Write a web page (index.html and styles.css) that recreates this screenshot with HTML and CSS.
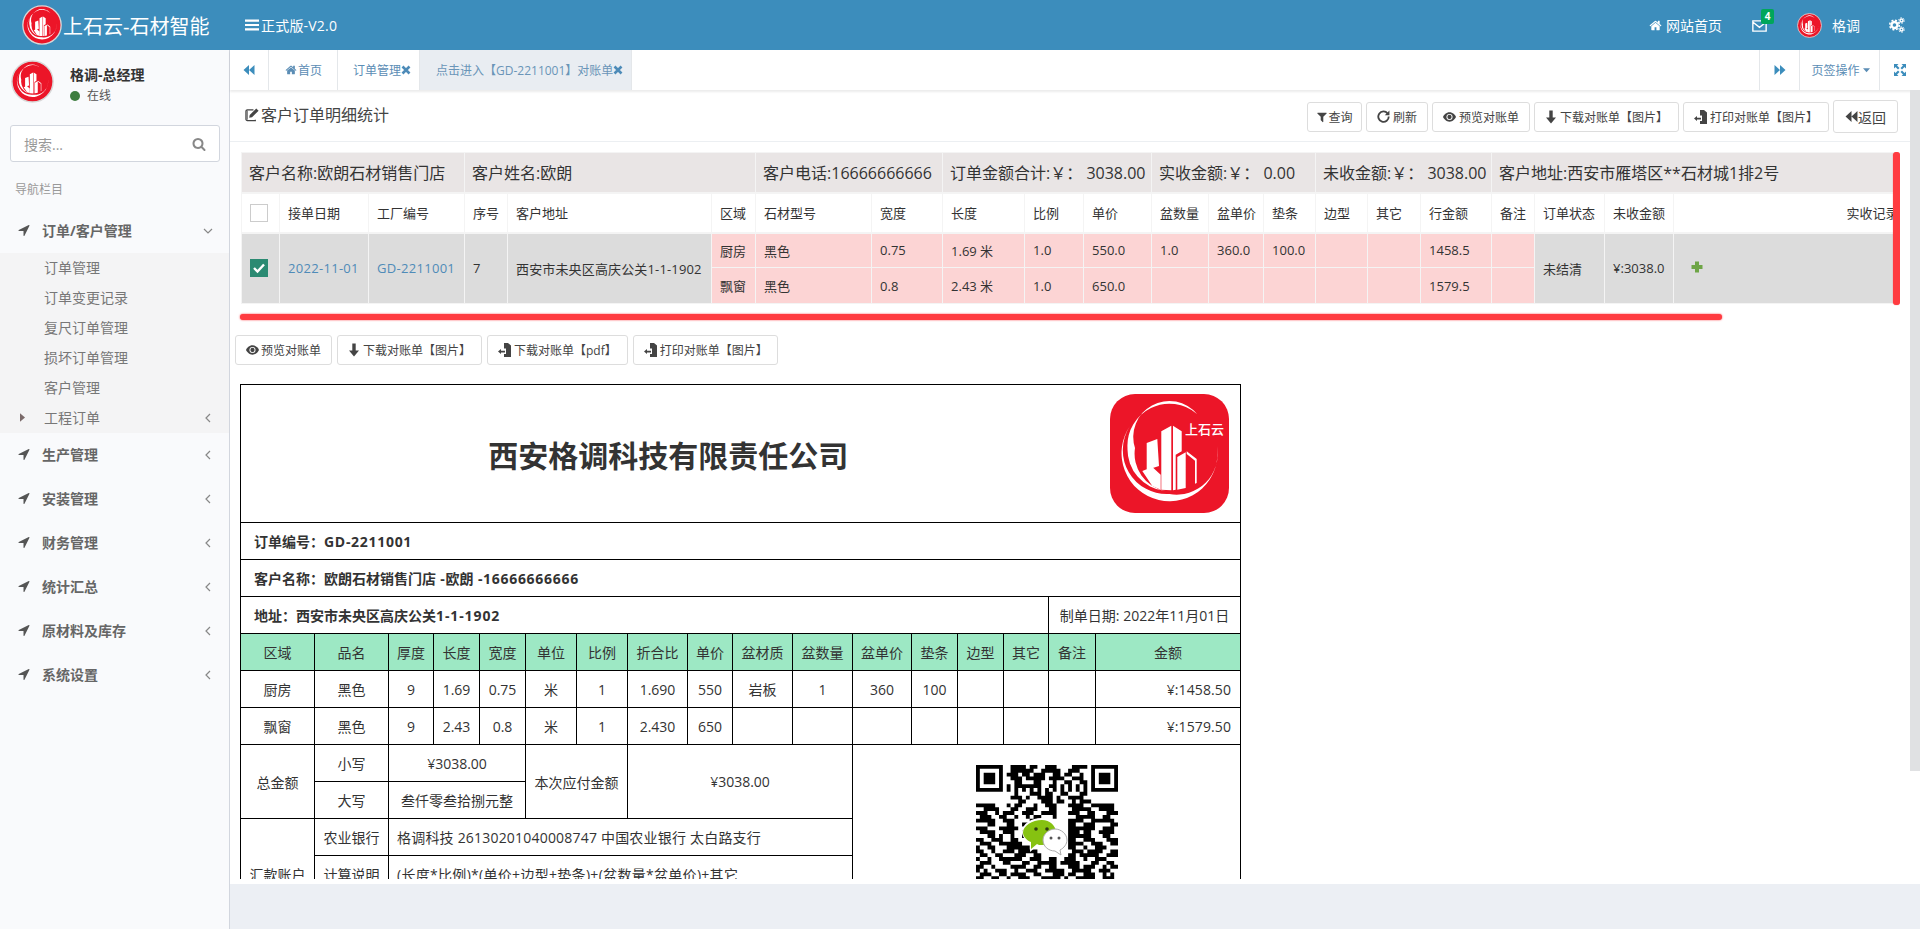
FILE: index.html
```html
<!DOCTYPE html>
<html lang="zh-CN">
<head>
<meta charset="utf-8">
<title>上石云-石材智能</title>
<link rel="stylesheet" href="styles.css">
</head>
<body>
<svg class="sprite" xmlns="http://www.w3.org/2000/svg">
  <symbol id="art" viewBox="0 0 119 119">
    <path fill="#fff" d="M107 52A48 48 0 1 1 20 32 44 44 0 0 0 59.500 100 41 41 0 0 0 107 52Z"/>
    <path fill="#fff" d="M87 20A42 42 0 0 0 17.500 54 42 42 0 0 0 55 97 38 38 0 0 1 25 54 36 36 0 0 1 87 20Z"/>
    <path fill="#fff" d="M36.700 49 47.300 45 49 72 36.700 76ZM32.300 77 42.300 73 50.700 80.700V95.700L42.300 92ZM51.300 37.300 61.300 31.700V96.300L51.300 95.700ZM63 31.700 71.700 37.300V57.300L65.700 60.700V95.700L63 96.300ZM67.300 63 75.700 58.300V94L67.300 95.700ZM76.700 57.300 86.700 65V89L85 89.700V66.700L76.700 60Z"/>
  </symbol>
  <symbol id="disc" viewBox="0 0 119 119">
    <circle cx="59.500" cy="59.500" r="57" fill="#ec1528" stroke="#d8d8d8" stroke-width="4"/>
    <use href="#art" x="6" y="6" width="107" height="107"/>
  </symbol>
  <symbol id="i-home" viewBox="0 0 1792 1792"><path d="M1472 992v480q0 26-19 45t-45 19h-384v-384h-256v384h-384q-26 0-45-19t-19-45v-480q0-1 .5-3t.5-3l575-474 575 474q1 2 1 6zm223-69l-62 74q-8 9-21 11h-3q-13 0-21-7l-692-577-692 577q-12 8-24 7-13-2-21-11l-62-74q-8-10-7-23.500t11-21.500l719-599q32-26 76-26t76 26l244 204v-195q0-14 9-23t23-9h192q14 0 23 9t9 23v408l219 182q10 8 11 21.500t-7 23.500z"/></symbol>
  <symbol id="i-nav" viewBox="0 0 1792 1792"><path d="M1593 349l-640 1280q-17 35-57 35-5 0-15-2-22-5-35.500-22.500t-13.500-39.500v-576h-576q-22 0-39.500-13.500t-22.500-35.500 4-42 29-30l1280-640q13-7 29-7 27 0 45 19 15 14 18.500 34.500t-6.500 39.500z"/></symbol>
  <symbol id="i-search" viewBox="0 0 1792 1792"><path d="M1216 832q0-185-131.500-316.500t-316.500-131.500-316.500 131.500-131.500 316.500 131.500 316.500 316.500 131.500 316.500-131.500 131.500-316.500zm512 832q0 52-38 90t-90 38q-54 0-90-38l-343-342q-179 124-399 124-143 0-273.500-55.500t-225-150-150-225-55.500-273.500 55.500-273.500 150-225 225-150 273.500-55.500 273.500 55.500 225 150 150 225 55.500 273.500q0 220-124 399l343 343q37 37 37 90z"/></symbol>
  <symbol id="i-filter" viewBox="0 0 1792 1792"><path d="M1595 295q17 41-14 70l-493 493v742q0 42-39 59-13 5-25 5-27 0-45-19l-256-256q-19-19-19-45v-486l-493-493q-31-29-14-70 17-39 59-39h1280q42 0 59 39z"/></symbol>
  <symbol id="i-bars" viewBox="0 0 14 14"><path d="M0 1.500h14v2.200H0zM0 5.900h14v2.200H0zM0 10.300h14v2.200H0z"/></symbol>
  <symbol id="i-back" viewBox="0 0 12 12"><path d="M6 1v10L0.500 6zM11.500 1v10L6 6z"/></symbol>
  <symbol id="i-fwd" viewBox="0 0 12 12"><path d="M0.500 1v10L6 6zM6 1v10l5.500-5z"/></symbol>
  <symbol id="i-expand" viewBox="0 0 12 12"><path d="M0 0h4.500L3 1.500 5.500 4 4 5.500 1.500 3 0 4.500zM12 0v4.500L10.500 3 8 5.500 6.500 4 9 1.500 7.500 0zM0 12V7.500L1.500 9 4 6.500 5.500 8 3 10.500 4.500 12zM12 12H7.500L9 10.500 6.500 8 8 6.500 10.500 9 12 7.500z"/></symbol>
  <symbol id="i-times" viewBox="0 0 10 10"><path d="M1.500 1.500l7 7M8.500 1.500l-7 7" fill="none" stroke="currentColor" stroke-width="2.600"/></symbol>
  <symbol id="i-edit" viewBox="0 0 16 16"><path d="M11 13.500v1H2.500a1.500 1.500 0 0 1-1.500-1.500V4.500A1.500 1.500 0 0 1 2.500 3H9" fill="none" stroke="currentColor" stroke-width="1.300"/><path d="M1.800 3.600h1v10h-1zM12 1.500l2.500 2.500-7 7-3 .5.500-3z"/></symbol>
  <symbol id="i-refresh" viewBox="0 0 12 12"><path d="M9.800 3.200A4.800 4.800 0 1 0 10.800 6" fill="none" stroke="currentColor" stroke-width="1.700"/><path d="M11.500 .5v4.300H7.200z"/></symbol>
  <symbol id="i-eye" viewBox="0 0 14 12"><path d="M7 1c3.500 0 6 2.800 7 5-1 2.200-3.500 5-7 5S1 8.200 0 6c1-2.200 3.500-5 7-5z"/><circle cx="7" cy="6" r="3.300" fill="#fff"/><circle cx="7" cy="6" r="2.300"/></symbol>
  <symbol id="i-down" viewBox="0 0 12 14"><path d="M4.300 .5h3.400v7H11L6 13.500 1 7.500h3.300z"/></symbol>
  <symbol id="i-print" viewBox="0 0 14 14"><path d="M6 0h4l3 2.500V14H6v-3h2V5.500H6zM0 8.500 3 6v1.800h4v1.600H3v1.600z"/></symbol>
  <symbol id="i-mail" viewBox="0 0 16 13"><path d="M.8 1h14.400v11H.8zM1 2.500l7 5.500 7-5.500" fill="none" stroke="currentColor" stroke-width="1.500"/></symbol>
  <symbol id="i-cogs" viewBox="0 0 16 16"><g fill="none" stroke="currentColor"><circle cx="5.500" cy="8" r="3" stroke-width="2.400"/><circle cx="5.500" cy="8" r="4.800" stroke-width="1.500" stroke-dasharray="2 1.770"/><circle cx="12.500" cy="3.500" r="1.500" stroke-width="1.500"/><circle cx="12.500" cy="12.500" r="1.500" stroke-width="1.500"/><circle cx="12.500" cy="3.500" r="2.800" stroke-width="1" stroke-dasharray="1.400 1.530"/><circle cx="12.500" cy="12.500" r="2.800" stroke-width="1" stroke-dasharray="1.400 1.530"/></g></symbol>
  <symbol id="i-left" viewBox="0 0 6 10"><path d="M5 1 1 5l4 4" fill="none" stroke="currentColor" stroke-width="1.200"/></symbol>
  <symbol id="i-chev" viewBox="0 0 10 6"><path d="M1 1l4 4 4-4" fill="none" stroke="currentColor" stroke-width="1.200"/></symbol>
  <symbol id="i-caret" viewBox="0 0 6 10"><path d="M0 0l6 5-6 5z"/></symbol>
  <symbol id="i-caretd" viewBox="0 0 8 5"><path d="M0 0h8L4 4.500z"/></symbol>
  <symbol id="i-plus" viewBox="0 0 12 12"><path d="M4 .5h4V4h3.500v4H8v3.500H4V8H.5V4H4z"/></symbol>
  <symbol id="i-check" viewBox="0 0 18 18"><path d="M4 9l3.500 3.500L14 5.500" fill="none" stroke="#fff" stroke-width="2.400"/></symbol>
</svg>

<header class="topbar">
  <div class="brand">
    <svg class="brand-disc"><use href="#disc"/></svg>
    <span class="brand-name">上石云-石材智能</span>
  </div>
  <div class="version"><svg class="ico ico-bars"><use href="#i-bars"/></svg>正式版-V2.0</div>
  <nav class="top-actions">
    <a class="top-link"><svg class="ico ico-13"><use href="#i-home"/></svg>网站首页</a>
    <a class="top-mail"><svg class="ico ico-mail"><use href="#i-mail"/></svg><b class="badge">4</b></a>
    <a class="top-user"><svg class="user-disc"><use href="#disc"/></svg>格调</a>
    <a class="top-cogs"><svg class="ico ico-cogs"><use href="#i-cogs"/></svg></a>
  </nav>
</header>

<div class="shell">
  <aside class="sidebar">
    <div class="user-panel">
      <svg class="panel-disc"><use href="#disc"/></svg>
      <div class="panel-info">
        <p class="panel-name">格调-总经理</p>
        <p class="panel-status"><i class="dot"></i>在线</p>
      </div>
    </div>
    <div class="search"><span>搜索...</span><svg class="ico ico-search"><use href="#i-search"/></svg></div>
    <div class="nav-title">导航栏目</div>
    <ul class="menu">
      <li class="menu-item"><svg class="ico ico-nav"><use href="#i-nav"/></svg><span>订单/客户管理</span><svg class="ico ico-chev"><use href="#i-chev"/></svg></li>
      <li class="submenu">
        <a>订单管理</a><a>订单变更记录</a><a>复尺订单管理</a><a>损坏订单管理</a><a>客户管理</a>
        <a class="sub-more"><svg class="ico ico-caret"><use href="#i-caret"/></svg>工程订单<svg class="ico ico-left"><use href="#i-left"/></svg></a>
      </li>
      <li class="menu-item"><svg class="ico ico-nav"><use href="#i-nav"/></svg><span>生产管理</span><svg class="ico ico-left"><use href="#i-left"/></svg></li>
      <li class="menu-item"><svg class="ico ico-nav"><use href="#i-nav"/></svg><span>安装管理</span><svg class="ico ico-left"><use href="#i-left"/></svg></li>
      <li class="menu-item"><svg class="ico ico-nav"><use href="#i-nav"/></svg><span>财务管理</span><svg class="ico ico-left"><use href="#i-left"/></svg></li>
      <li class="menu-item"><svg class="ico ico-nav"><use href="#i-nav"/></svg><span>统计汇总</span><svg class="ico ico-left"><use href="#i-left"/></svg></li>
      <li class="menu-item"><svg class="ico ico-nav"><use href="#i-nav"/></svg><span>原材料及库存</span><svg class="ico ico-left"><use href="#i-left"/></svg></li>
      <li class="menu-item"><svg class="ico ico-nav"><use href="#i-nav"/></svg><span>系统设置</span><svg class="ico ico-left"><use href="#i-left"/></svg></li>
    </ul>
  </aside>

  <main class="main">
    <div class="tabs">
      <a class="tab tab-arrow"><svg class="ico ico-arrow"><use href="#i-back"/></svg></a>
      <a class="tab tab-home"><svg class="ico ico-12"><use href="#i-home"/></svg>首页</a>
      <a class="tab tab-orders">订单管理<svg class="ico ico-x"><use href="#i-times"/></svg></a>
      <a class="tab tab-active">点击进入【GD-2211001】对账单<svg class="ico ico-x"><use href="#i-times"/></svg></a>
      <div class="tabs-fill"></div>
      <a class="tab tab-arrow tab-end"><svg class="ico ico-arrow"><use href="#i-fwd"/></svg></a>
      <a class="tab tab-ops">页签操作<svg class="ico ico-caretd"><use href="#i-caretd"/></svg></a>
      <a class="tab tab-full"><svg class="ico ico-arrow"><use href="#i-expand"/></svg></a>
    </div>

    <section class="content">
      <div class="box-head">
        <h3 class="box-title"><svg class="ico ico-edit"><use href="#i-edit"/></svg>客户订单明细统计</h3>
        <div class="toolbar">
          <button class="btn btn-tight"><svg class="ico ico-12"><use href="#i-filter"/></svg>查询</button>
          <button class="btn btn-mid"><svg class="ico ico-refresh"><use href="#i-refresh"/></svg>刷新</button>
          <button class="btn"><svg class="ico ico-eye"><use href="#i-eye"/></svg>预览对账单</button>
          <button class="btn"><svg class="ico ico-down"><use href="#i-down"/></svg>下载对账单【图片】</button>
          <button class="btn btn-print"><svg class="ico ico-print"><use href="#i-print"/></svg>打印对账单【图片】</button>
          <button class="btn btn-back"><svg class="ico ico-13"><use href="#i-back"/></svg>返回</button>
        </div>
      </div>

      <div class="orders-wrap">
        <table class="orders">
          <colgroup><col><col><col><col><col><col><col><col><col><col><col><col><col><col><col><col><col><col><col><col><col></colgroup>
          <tr class="sum-row">
            <td colspan="3">客户名称:欧朗石材销售门店</td>
            <td colspan="3">客户姓名:欧朗</td>
            <td colspan="2">客户电话:16666666666</td>
            <td colspan="3">订单金额合计:￥： 3038.00</td>
            <td colspan="3">实收金额:￥： 0.00</td>
            <td colspan="3">未收金额:￥： 3038.00</td>
            <td colspan="4">客户地址:西安市雁塔区**石材城1排2号</td>
          </tr>
          <tr class="head-row">
            <td><i class="check"></i></td>
            <td>接单日期</td><td>工厂编号</td><td>序号</td><td>客户地址</td><td>区域</td><td>石材型号</td><td>宽度</td><td>长度</td><td>比例</td><td>单价</td><td>盆数量</td><td>盆单价</td><td>垫条</td><td>边型</td><td>其它</td><td>行金额</td><td>备注</td><td>订单状态</td><td>未收金额</td><td class="center">实收记录</td>
          </tr>
          <tr class="data-row">
            <td class="grey" rowspan="2"><svg class="check-on"><use href="#i-check"/></svg></td>
            <td class="grey link" rowspan="2">2022-11-01</td>
            <td class="grey link" rowspan="2">GD-2211001</td>
            <td class="grey" rowspan="2">7</td>
            <td class="grey addr" rowspan="2">西安市未央区高庆公关1-1-1902</td>
            <td class="pink">厨房</td><td class="pink">黑色</td><td class="pink">0.75</td><td class="pink">1.69 米</td><td class="pink">1.0</td><td class="pink">550.0</td><td class="pink">1.0</td><td class="pink">360.0</td><td class="pink">100.0</td><td class="pink"></td><td class="pink"></td><td class="pink">1458.5</td><td class="pink"></td>
            <td class="grey" rowspan="2">未结清</td>
            <td class="grey" rowspan="2">¥:3038.0</td>
            <td class="grey plus-cell" rowspan="2"><svg class="ico ico-plus"><use href="#i-plus"/></svg></td>
          </tr>
          <tr class="data-row data-row-last">
            <td class="pink">飘窗</td><td class="pink">黑色</td><td class="pink">0.8</td><td class="pink">2.43 米</td><td class="pink">1.0</td><td class="pink">650.0</td><td class="pink"></td><td class="pink"></td><td class="pink"></td><td class="pink"></td><td class="pink"></td><td class="pink">1579.5</td><td class="pink"></td>
          </tr>
        </table>
        <i class="red-v"></i>
      </div>
      <i class="red-h"></i>

      <div class="toolbar toolbar-low">
        <button class="btn"><svg class="ico ico-eye"><use href="#i-eye"/></svg>预览对账单</button>
        <button class="btn"><svg class="ico ico-down"><use href="#i-down"/></svg>下载对账单【图片】</button>
        <button class="btn btn-print"><svg class="ico ico-print"><use href="#i-print"/></svg>下载对账单【pdf】</button>
        <button class="btn btn-print"><svg class="ico ico-print"><use href="#i-print"/></svg>打印对账单【图片】</button>
      </div>

      <div class="invoice-wrap">
        <table class="invoice">
          <colgroup><col><col><col><col><col><col><col><col><col><col><col><col><col><col><col><col><col></colgroup>
          <tr class="title-row">
            <td colspan="16" class="inv-title">西安格调科技有限责任公司</td>
            <td class="inv-logo"><svg class="logo-big" viewBox="0 0 119 119"><rect width="119" height="119" rx="25" fill="#ec1528"/><use href="#art" width="119" height="119"/><text x="75" y="40" class="mark-text">上石云</text></svg></td>
          </tr>
          <tr><td colspan="17" class="meta">订单编号：<span class="num">GD-2211001</span></td></tr>
          <tr><td colspan="17" class="meta">客户名称：欧朗石材销售门店<span class="num"> -</span>欧朗<span class="num"> -16666666666</span></td></tr>
          <tr><td colspan="15" class="meta">地址：西安市未央区高庆公关<span class="num num-wide">1-1-1902</span></td><td colspan="2" class="inv-date">制单日期: 2022年11月01日</td></tr>
          <tr class="inv-head"><td>区域</td><td>品名</td><td>厚度</td><td>长度</td><td>宽度</td><td>单位</td><td>比例</td><td>折合比</td><td>单价</td><td>盆材质</td><td>盆数量</td><td>盆单价</td><td>垫条</td><td>边型</td><td>其它</td><td>备注</td><td>金额</td></tr>
          <tr><td>厨房</td><td>黑色</td><td>9</td><td>1.69</td><td>0.75</td><td>米</td><td>1</td><td>1.690</td><td>550</td><td>岩板</td><td>1</td><td>360</td><td>100</td><td></td><td></td><td></td><td class="money">¥:1458.50</td></tr>
          <tr><td>飘窗</td><td>黑色</td><td>9</td><td>2.43</td><td>0.8</td><td>米</td><td>1</td><td>2.430</td><td>650</td><td></td><td></td><td></td><td></td><td></td><td></td><td></td><td class="money">¥:1579.50</td></tr>
          <tr>
            <td rowspan="2">总金额</td><td>小写</td><td colspan="3">¥3038.00</td>
            <td colspan="2" rowspan="2">本次应付金额</td><td colspan="4" rowspan="2">¥3038.00</td>
            <td colspan="6" rowspan="5" class="qr-cell">
              <svg class="qr" viewBox="0 0 142 142">
                <g transform="scale(3.838)">
                  <path fill-rule="evenodd" d="M0 0h7v7H0zM1 1v5h5V1zM2 2h3v3H2zM30 0h7v7h-7zM31 1v5h5V1zM32 2h3v3h-3z"/>
                  <path fill="none" stroke="#000" d="M9 .5h4M14 .5h2M18 .5h3M25 .5h4M9 1.500h6M17 1.500h5M24 1.500h3M8 2.500h3M12 2.500h2M15 2.500h3M20 2.500h2M23 2.500h2M27 2.500h1M9 3.500h3M13 3.500h5M19 3.500h4M25 3.500h3M10 4.500h2M15 4.500h2M20 4.500h1M23 4.500h2M27 4.500h2M8 5.500h1M10 5.500h7M19 5.500h2M22 5.500h1M24 5.500h1M26 5.500h1M28 5.500h1M8 6.500h1M10 6.500h1M12 6.500h1M14 6.500h1M16 6.500h1M18 6.500h1M20 6.500h1M22 6.500h1M24 6.500h1M26 6.500h1M28 6.500h1M10 7.500h1M14 7.500h3M18 7.500h2M22 7.500h2M27 7.500h2M9 8.500h3M13 8.500h1M16 8.500h4M21 8.500h1M24 8.500h4M11 9.500h2M17 9.500h3M21 9.500h2M25 9.500h1M27 9.500h3M0 10.500h5M8 10.500h1M10 10.500h2M15 10.500h1M18 10.500h3M24 10.500h4M30 10.500h6M2 11.500h4M9 11.500h2M13 11.500h3M19 11.500h2M25 11.500h5M32 11.500h4M0 12.500h3M5 12.500h1M7 12.500h3M12 12.500h3M17 12.500h4M24 12.500h3M29 12.500h2M34 12.500h3M1 13.500h3M6 13.500h2M10 13.500h1M13 13.500h1M15 13.500h2M20 13.500h1M26 13.500h5M33 13.500h2M0 14.500h5M7 14.500h3M14 14.500h2M24 14.500h4M30 14.500h6M3 15.500h2M8 15.500h2M12 15.500h2M24 15.500h2M28 15.500h3M35 15.500h2M0 16.500h3M6 16.500h5M24 16.500h7M33 16.500h3M1 17.500h4M7 17.500h3M12 17.500h2M24 17.500h3M28 17.500h2M32 17.500h4M3 18.500h2M6 18.500h1M9 18.500h1M12 18.500h1M24 18.500h6M33 18.500h2M0 19.500h2M4 19.500h3M9 19.500h2M24 19.500h2M28 19.500h3M34 19.500h3M1 20.500h3M6 20.500h6M24 20.500h4M30 20.500h3M35 20.500h2M0 21.500h1M3 21.500h2M8 21.500h6M24 21.500h2M28 21.500h1M31 21.500h3M0 22.500h2M4 22.500h1M7 22.500h3M11 22.500h5M25 22.500h3M29 22.500h4M35 22.500h2M1 23.500h2M5 23.500h2M10 23.500h3M15 23.500h2M24 23.500h2M27 23.500h5M34 23.500h3M0 24.500h1M3 24.500h1M6 24.500h6M14 24.500h3M19 24.500h2M23 24.500h3M28 24.500h1M31 24.500h3M1 25.500h3M7 25.500h2M12 25.500h2M16 25.500h5M22 25.500h5M30 25.500h2M34 25.500h2M0 26.500h2M4 26.500h1M9 26.500h4M15 26.500h2M19 26.500h2M24 26.500h3M28 26.500h3M33 26.500h1M35 26.500h2M0 27.500h1M2 27.500h1M5 27.500h3M10 27.500h1M13 27.500h3M18 27.500h5M25 27.500h5M32 27.500h3M1 28.500h3M6 28.500h2M9 28.500h4M15 28.500h2M20 28.500h3M24 28.500h2M28 28.500h3M33 28.500h1M35 28.500h1M0 29.500h2M4 29.500h2M8 29.500h1M11 29.500h3M17 29.500h5M23 29.500h1M26 29.500h5M33 29.500h3"/>
                </g>
                <path fill="#fff" d="M66 53c9 0 16 6 16 14s-6 14-16 14l-5 0-7 6 0-9c-5-3-8-7-8-11 0-8 9-14 20-14z"/>
                <path fill="#86c211" d="M66 55c8 0 14 6 14 12.500S74 80 66 80c-2 0-4 0-5-1l-6 5 0-7c-5-2-8-6-8-9.500C47 61 56 55 66 55z"/>
                <circle cx="60" cy="64" r="1.800" fill="#2d3a12"/><circle cx="71" cy="64" r="1.800" fill="#2d3a12"/>
                <path fill="#fff" stroke="#aaa" d="M79 64c6 0 12 5 12 11 0 4-3 8-7 10l1 5-6-4c-7 0-12-5-12-11s6-11 12-11z"/>
                <circle cx="75" cy="73" r="1.500" fill="#555"/><circle cx="83" cy="73" r="1.500" fill="#555"/>
              </svg>
            </td>
          </tr>
          <tr><td>大写</td><td colspan="3">叁仟零叁拾捌元整</td></tr>
          <tr><td rowspan="3">汇款账户</td><td>农业银行</td><td colspan="9" class="left">格调科技 26130201040008747 中国农业银行 太白路支行</td></tr>
          <tr><td>计算说明</td><td colspan="9" class="left calc">(长度*比例)*(单价+边型+垫条)+(盆数量*盆单价)+其它</td></tr>
          <tr><td></td><td colspan="9"></td></tr>
        </table>
      </div>
    </section>
    <div class="footer-band"></div>
    <i class="thumb"></i>
  </main>
</div>
</body>
</html>
```
FILE: styles.css
```css
* { box-sizing: border-box; }
html, body { margin: 0; height: 100%; overflow: hidden; }
body {
  font-family: "Open Sans", "Noto Sans CJK SC", sans-serif;
  font-size: 14px;
  color: #333;
  background: #eceff4;
  display: flex;
  flex-direction: column;
}
.sprite { width: 0; height: 0; position: absolute; }
.mark-text { font-family: "Noto Sans CJK SC", sans-serif; font-size: 13px; fill: #fff; font-weight: 500; }
p, h3, ul { margin: 0; padding: 0; }
ul { list-style: none; }
.ico { display: inline-block; fill: currentColor; flex: none; }
.ico-12 { width: 12px; height: 12px; }
.ico-13 { width: 13px; height: 13px; }

/* top bar */
.topbar { height: 50px; flex: none; background: #3c8dbc; color: #fff; display: flex; align-items: center; }
.brand { width: 245px; padding-left: 22px; display: flex; align-items: center; flex: none; }
.brand-disc { width: 40px; height: 40px; flex: none; }
.brand-name { font-size: 20px; white-space: nowrap; margin-left: 1px; }
.version { font-size: 14px; display: flex; align-items: center; gap: 2px; letter-spacing: .2px; }
.ico-bars { width: 14px; height: 14px; }
.top-actions { margin-left: auto; display: flex; align-items: center; height: 50px; }
.top-link { display: flex; align-items: center; gap: 4px; font-size: 14px; }
.top-mail { margin-left: 30px; position: relative; height: 50px; display: flex; align-items: center; }
.ico-mail { width: 15px; height: 12px; margin-top: 1px; color: #fff; }
.badge { position: absolute; left: 9px; top: 9px; width: 13px; height: 15px; background: #00a65a; border-radius: 2px; font-size: 10px; line-height: 15px; text-align: center; }
.top-user { margin-left: 30px; display: flex; align-items: center; gap: 10px; font-size: 14px; }
.user-disc { width: 25px; height: 25px; }
.top-cogs { margin: 0 15px 0 29px; display: flex; }
.ico-cogs { width: 16px; height: 16px; }

/* shell */
.shell { flex: 1; min-height: 0; display: flex; }
.sidebar { width: 230px; flex: none; background: #f9fafc; border-right: 1px solid #d2d6de; color: #666; }
.user-panel { height: 75px; padding: 10px 0 0 11px; display: flex; }
.panel-disc { width: 43px; height: 43px; flex: none; }
.panel-info { margin-left: 16px; padding-top: 6px; }
.panel-name { font-size: 14px; font-weight: 700; color: #333; line-height: 18px; }
.panel-status { font-size: 12px; line-height: 18px; margin-top: 3px; display: flex; align-items: center; color: #555; }
.dot { width: 10px; height: 10px; border-radius: 50%; background: #3d7d3f; margin-right: 7px; }
.search { margin-left: 10px; width: 210px; height: 37px; background: #fff; border: 1px solid #d2d6de; border-radius: 3px; padding: 0 13px; display: flex; align-items: center; justify-content: space-between; color: #999; font-size: 14px; }
.ico-search { width: 14px; height: 14px; color: #888; }
.nav-title { height: 47px; padding: 19px 0 0 15px; font-size: 12px; line-height: 18px; color: #999; }
.menu-item { height: 44px; padding: 0 0 2px 17px; display: flex; align-items: center; font-size: 14px; font-weight: 700; color: #666; position: relative; }
.menu-item span { margin-left: 11px; }
.ico-nav { width: 14px; height: 14px; color: #555; }
.ico-left { width: 6px; height: 10px; color: #888; position: absolute; left: 205px; top: 50%; margin-top: -5px; }
.ico-chev { width: 10px; height: 6px; color: #888; position: absolute; left: 203px; top: 50%; margin-top: -3px; }
.submenu { background: #f4f4f5; }
.submenu a { display: block; height: 30px; line-height: 30px; padding-left: 44px; font-size: 14px; color: #777; position: relative; }
.ico-caret { width: 5px; height: 9px; color: #7a6a6a; position: absolute; left: 20px; top: 10px; }

/* main */
.main { flex: 1; min-width: 0; display: flex; flex-direction: column; position: relative; }
.tabs { height: 40px; flex: none; background: #fff; display: flex; box-shadow: 0 2px 2px rgba(0,0,0,.08); position: relative; z-index: 1; font-size: 12px; color: #5b8db5; }
.tab { display: flex; align-items: center; justify-content: center; height: 40px; border-right: 1px solid #e4e7ea; white-space: nowrap; }
.tab-arrow { width: 39px; }
.tab-end { border-left: 1px solid #e4e7ea; width: 41px; }
.tab-home { width: 69px; gap: 1px; padding-left: 1px; }
.tab-orders { width: 82px; justify-content: flex-start; padding-left: 15px; }
.tab-active { width: 212px; background: #e9edf2; color: #6a95b8; justify-content: flex-start; padding-left: 16px; }
.tab-ops { width: 80px; gap: 3px; padding-left: 2px; }
.tab-full { width: 40px; border-right: 0; }
.tabs-fill { flex: 1; }
.ico-arrow { width: 12px; height: 12px; color: #3c8dbc; }
.ico-x { width: 10px; height: 10px; color: #4d8bb8; }
.ico-caretd { width: 7px; height: 5px; }

/* content */
.content { height: 794px; flex: none; background: #fff; display: flex; flex-direction: column; padding-bottom: 5px; }
.box-head { height: 52px; flex: none; margin-right: 10px; border-bottom: 1px solid #eceff2; padding: 10px 10px 0 15px; display: flex; justify-content: space-between; }
.box-title { font-size: 16px; font-weight: 400; color: #444; display: flex; align-items: center; height: 28px; gap: 1px; }
.ico-edit { width: 15px; height: 15px; }
.toolbar { display: flex; gap: 4px; align-items: center; height: 33px; margin-right: 2px; }
.btn { height: 30px; padding: 0 10px; background: #fff; border: 1px solid #ddd; border-radius: 3px; font: inherit; font-size: 12px; color: #444; display: inline-flex; align-items: center; gap: 3px; white-space: nowrap; }
.btn-tight { padding: 0 8.500px; gap: 0; }
.btn-mid { padding: 0 10px; gap: 3px; }
.btn-back { height: 33px; font-size: 14px; padding: 0 11px; gap: 0; }
.btn-print { gap: 2px; }
.ico-refresh { width: 13px; height: 13px; }
.ico-eye { width: 13px; height: 12px; }
.ico-down { width: 12px; height: 14px; }
.ico-print { width: 14px; height: 14px; }

.orders-wrap { margin: 10px 0 0 11px; width: 1659px; height: 154px; overflow: hidden; position: relative; flex: none; }
.orders { border-collapse: collapse; table-layout: fixed; width: 1830px; font-size: 13px; }
.orders td { border: 1px solid #f4f4f4; padding: 0 8px; white-space: nowrap; }
.orders col:nth-child(1) { width: 38px; }
.orders col:nth-child(2) { width: 89px; }
.orders col:nth-child(3) { width: 96px; }
.orders col:nth-child(4) { width: 43px; }
.orders col:nth-child(5) { width: 204px; }
.orders col:nth-child(6) { width: 44px; }
.orders col:nth-child(7) { width: 116px; }
.orders col:nth-child(8) { width: 71px; }
.orders col:nth-child(9) { width: 82px; }
.orders col:nth-child(10) { width: 59px; }
.orders col:nth-child(11) { width: 68px; }
.orders col:nth-child(12) { width: 57px; }
.orders col:nth-child(13) { width: 55px; }
.orders col:nth-child(14) { width: 52px; }
.orders col:nth-child(15) { width: 52px; }
.orders col:nth-child(16) { width: 53px; }
.orders col:nth-child(17) { width: 71px; }
.orders col:nth-child(18) { width: 43px; }
.orders col:nth-child(19) { width: 70px; }
.orders col:nth-child(20) { width: 69px; }
.orders col:nth-child(21) { width: 398px; }
.sum-row td { height: 40px; background: #e9e5e5; font-size: 16px; border-bottom-width: 2px; overflow: hidden; padding-left: 7px; }
.head-row td { height: 40px; border-bottom-width: 2px; }
.data-row td { height: 35px; }
.data-row-last td { height: 36px; }
.center { text-align: center; }
.grey { background: #dcdcdc; }
.pink { background: #fcd4d4; }
.link { color: #4f8bb8; letter-spacing: .3px; }
.addr { letter-spacing: .15px; }
.check { display: block; width: 18px; height: 18px; background: #fff; border: 1px solid #ccc; }
.check-on { display: block; width: 18px; height: 18px; background: #2b8a72; }
.plus-cell { padding-left: 17px !important; }
.ico-plus { width: 12px; height: 12px; color: #6ea546; }
.red-v { position: absolute; left: 1652px; top: 0; width: 7px; height: 153px; background: #ff3b40; border-radius: 4px; box-shadow: 0 0 1px #ff3b40; }
.red-h { display: block; flex: none; margin: 8px 0 0 10px; width: 1482px; height: 6px; background: #ff3b40; border-radius: 3px; box-shadow: 0 0 2px #ff3b40; }

.toolbar-low { margin: 15px 0 0 5px; gap: 5px; height: 30px; flex: none; }
.toolbar-low .ico-eye { margin-right: -1px; }
.toolbar-low .btn:last-child { padding-right: 9px; }

.invoice-wrap { margin: 19px 0 0 10px; flex: 1; min-height: 0; overflow: hidden; }
.invoice { border-collapse: collapse; table-layout: fixed; width: 1000px; font-size: 14px; text-align: center; }
.invoice td { border: 1px solid #000; height: 37px; padding: 0; white-space: nowrap; }
.invoice col:nth-child(1), .invoice col:nth-child(2) { width: 74px; }
.invoice col:nth-child(3) { width: 45px; }
.invoice col:nth-child(4), .invoice col:nth-child(5) { width: 46px; }
.invoice col:nth-child(6), .invoice col:nth-child(7) { width: 51px; }
.invoice col:nth-child(8) { width: 60px; }
.invoice col:nth-child(9) { width: 45px; }
.invoice col:nth-child(10), .invoice col:nth-child(11) { width: 60px; }
.invoice col:nth-child(12) { width: 59px; }
.invoice col:nth-child(13), .invoice col:nth-child(14) { width: 46px; }
.invoice col:nth-child(15) { width: 45px; }
.invoice col:nth-child(16) { width: 47px; }
.invoice col:nth-child(17) { width: 145px; }
.invoice .title-row td { height: 138px; }
.invoice .inv-title { font-size: 30px; font-weight: 700; border-right: 0; }
.invoice .inv-logo { border-left: 0; text-align: right; padding-right: 11px; }
.logo-big { display: inline-block; width: 119px; height: 119px; vertical-align: middle; }
.invoice .meta { text-align: left; padding-left: 13px; font-weight: 700; }
.num { letter-spacing: .7px; white-space: pre; }
.num-wide { letter-spacing: .9px; }
.inv-date { font-size: 14px; }
.inv-head td { background: #9de8c4; }
.invoice .money { text-align: right; padding-right: 9px; letter-spacing: .1px; }
.invoice .left { text-align: left; padding-left: 8px; letter-spacing: .2px; }
.invoice .calc { letter-spacing: .3px; }
.invoice .qr-cell { vertical-align: top; padding-top: 20px; }
.qr { display: block; width: 142px; height: 142px; margin: 0 auto; }

.footer-band { flex: 1; background: #eceff4; }
.thumb { position: absolute; right: 0; top: 40px; width: 10px; height: 681px; background: #e0e1e3; z-index: 2; }
```
